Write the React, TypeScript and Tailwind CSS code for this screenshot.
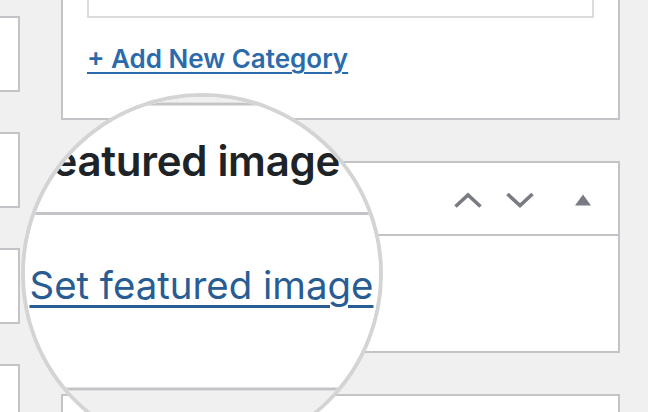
import React from "react";

const Chevron = ({ up }: { up: boolean }) => (
  <svg width="30" height="16" viewBox="0 0 30 16" fill="none">
    <path
      d={up ? "M2.5 14.5 L15 3 L27.5 14.5" : "M2.5 2 L15 13.5 L27.5 2"}
      stroke="#787c82"
      strokeWidth="3.6"
      strokeLinejoin="miter"
    />
  </svg>
);

const Triangle = () => (
  <svg width="18" height="12" viewBox="0 0 18 12">
    <path d="M9 0.5 L17 11.5 L1 11.5 Z" fill="#787c82" />
  </svg>
);

const Page = ({ mag }: { mag?: boolean }) => (
  <div className="w-[648px] h-[412px] bg-[#f0f0f1] flex overflow-hidden font-[Inter,'Noto_Sans',sans-serif]">
    <div className="w-[20px] shrink-0 flex flex-col gap-[40px] pt-[16px]">
      {[0, 1, 2, 3].map((i) => (
        <div key={i} className="h-[76px] shrink-0 bg-white border-y-2 border-r-2 border-[#c3c4c7]" />
      ))}
    </div>
    <div className="ml-[41px] w-[559px] shrink-0 flex flex-col gap-[41px]">
      <div className="h-[120px] shrink-0 bg-white border-x-2 border-b-2 border-[#c3c4c7] px-6 flex flex-col">
        <div className="h-[18px] border-x-2 border-b-2 border-[#dcdcde]" />
        <div className="mt-[25px] leading-[32px]">
          <a className="text-[26px] font-semibold text-[#2c6bab] underline decoration-2 underline-offset-[4px]">
            + Add New Category
          </a>
        </div>
      </div>
      <div className="h-[192px] shrink-0 bg-white border-2 border-[#c3c4c7] flex flex-col">
        <div className="h-[73px] shrink-0 border-b-2 border-[#c3c4c7] pl-6 pr-[26px] flex items-center">
          <h2 className="flex-1 text-[28px] font-semibold text-[#1d2327] tracking-[-0.2px] pt-[2px]">Featured image</h2>
          <div className="flex items-center mt-[2px]">
            <Chevron up />
            <div className="w-[22px]" />
            <Chevron up={false} />
            <div className="w-[39px]" />
            <Triangle />
          </div>
        </div>
        <div className="px-6 pt-[30px] leading-[34px]">
          <a
            className={
              mag
                ? "text-[25.6px] text-[#285d94] underline decoration-2 underline-offset-[4px]"
                : "text-[25.6px] text-[#2c6bab] underline decoration-2 underline-offset-[4px]"
            }
          >
            Set featured image
          </a>
        </div>
      </div>
      <div className="h-[120px] shrink-0 bg-white border-2 border-[#c3c4c7]" />
    </div>
  </div>
);

export default function App() {
  return (
    <div className="relative w-[648px] h-[412px] overflow-hidden">
      <Page />
      <div className="absolute left-[21px] top-[93px] w-[362px] h-[362px] rounded-full overflow-hidden border-4 border-[#d4d4d4] bg-white">
        <div className="absolute left-[-25px] top-[-97px] w-[648px] h-[412px] origin-[202px_278px] scale-150">
          <Page mag />
        </div>
      </div>
    </div>
  );
}
